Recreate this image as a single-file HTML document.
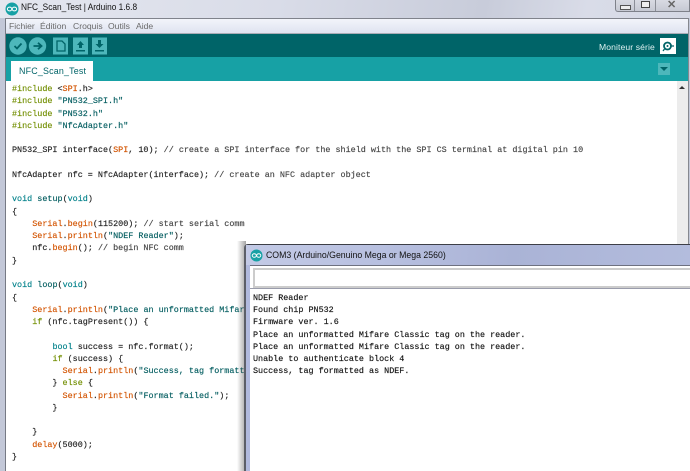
<!DOCTYPE html>
<html><head><meta charset="utf-8"><style>
html,body{margin:0;padding:0;background:#fff}
#r{position:relative;width:690px;height:471px;overflow:hidden;background:#fff;font-family:"Liberation Sans",sans-serif;filter:blur(.3px)}
#r div{position:absolute}
.code,.mon{font:8.43px/12.27px "Liberation Mono",monospace;white-space:pre;color:#222;margin:0;-webkit-text-stroke:.14px currentColor}
.o{color:#d35400}.t{color:#00818a}.g{color:#728e00}.s{color:#005c5f}
.code .c{color:#444}
.m{top:19px;font-size:8.6px;line-height:14px;color:#6a6a6a;white-space:nowrap}
</style></head><body><div id="r">
<div style="left:0;top:0;width:690px;height:18px;background:linear-gradient(100deg,#e4e7ef 0,#d9dce8 40%,#c8ccda 70%,#d9dce8 85%,#d4d8e4 100%)"></div>
<div style="left:0;top:18px;width:5px;height:453px;background:#c3c8d8"></div>
<div style="left:5px;top:18px;width:1px;height:453px;background:#767a85"></div>
<div style="left:5px;top:18px;width:685px;height:1px;background:#80838c"></div>
<svg style="position:absolute;left:5px;top:2px" width="14" height="14" viewBox="0 0 14 14"><circle cx="7" cy="7" r="6.5" fill="#17a1a5"/><ellipse cx="4.600" cy="7" rx="2.200" ry="1.900" fill="none" stroke="#fff" stroke-width="1"/><ellipse cx="9.400" cy="7" rx="2.200" ry="1.900" fill="none" stroke="#fff" stroke-width="1"/></svg>
<div style="left:21px;top:1px;font-size:9.600px;line-height:14px;color:#111;white-space:nowrap;transform:scaleX(.865);transform-origin:0 0">NFC_Scan_Test | Arduino 1.6.8</div>
<div style="left:615px;top:0;width:75px;height:12px;background:linear-gradient(#d8dae2,#c6c9d3);border:1px solid #7e818a;border-top:none;border-radius:0 0 0 3px;box-sizing:border-box"></div>
<div style="left:634px;top:0;width:1px;height:11px;background:#8b8e97"></div>
<div style="left:655px;top:0;width:1px;height:11px;background:#8b8e97"></div>
<div style="left:620px;top:5px;width:9px;height:3px;border:1px solid #555;background:#eee"></div>
<div style="left:641px;top:1px;width:7px;height:5px;border:1px solid #444;background:#eee"></div>
<div style="left:667px;top:-1px;font-size:11px;line-height:12px;font-weight:bold;color:#666">✕</div>

<div style="left:6px;top:19px;width:684px;height:14px;background:linear-gradient(#f2f4fa,#dfe3f0)"></div>
<div class="m" style="left:9px">Fichier</div>
<div class="m" style="left:40px">Édition</div>
<div class="m" style="left:73px">Croquis</div>
<div class="m" style="left:108px">Outils</div>
<div class="m" style="left:136px">Aide</div>
<div style="left:6px;top:33px;width:684px;height:1px;background:#a9acb6"></div>

<div style="left:6px;top:34px;width:684px;height:23px;background:#006468"></div>
<div style="left:6px;top:57px;width:684px;height:24px;background:#17a1a5"></div>
<svg style="position:absolute;left:9px;top:37px" width="100" height="18" viewBox="0 0 100 18">
<circle cx="9" cy="9" r="8.700" fill="#4db7bb"/><path d="M5.500 9l2.500 2.500 4.500-5" fill="none" stroke="#006468" stroke-width="1.800"/>
<circle cx="28.500" cy="9" r="8.700" fill="#4db7bb"/><path d="M24.500 9h7M29 5.800L32.500 9l-3.500 3.200" fill="none" stroke="#006468" stroke-width="1.800"/>
<rect x="44" y="0.500" width="15" height="17" fill="#4db7bb"/><path d="M48 4h5l3 3v7h-8z" fill="none" stroke="#006468" stroke-width="1.300"/>
<rect x="64" y="0.500" width="15" height="17" fill="#4db7bb"/><path d="M71.500 4l3.500 4h-2v3h-3v-3h-2zM67 13h9v1.500h-9z" fill="#006468"/>
<rect x="83" y="0.500" width="15" height="17" fill="#4db7bb"/><path d="M89 3h3v4h2.500l-4 4-4-4h2.500zM86 13h9v1.500h-9z" fill="#006468"/>
</svg>
<div style="left:599px;top:41px;font-size:8.600px;line-height:12px;color:#dff1f1;white-space:nowrap;letter-spacing:.1px">Moniteur série</div>
<div style="left:660px;top:38px;width:16px;height:16px;background:#fff"></div>
<svg style="position:absolute;left:660px;top:38px" width="16" height="16" viewBox="0 0 16 16"><circle cx="7.500" cy="8" r="3.500" fill="none" stroke="#006468" stroke-width="1.800"/><circle cx="7.500" cy="8" r="1" fill="#006468"/><path d="M4.500 11l-1.500 2M11 8h3" stroke="#006468" stroke-width="1.300"/></svg>
<div style="left:11px;top:61px;width:82px;height:20px;background:#fff"></div>
<div style="left:19px;top:61px;font-size:8.900px;line-height:20px;color:#006468;white-space:nowrap;letter-spacing:.2px">NFC_Scan_Test</div>
<div style="left:658px;top:63px;width:12px;height:12px;background:#4db7bb"></div>
<div style="left:660px;top:67px;width:0;height:0;border-left:4px solid transparent;border-right:4px solid transparent;border-top:4px solid #006468"></div>

<div style="left:677px;top:81px;width:11px;height:390px;background:#ececec"></div>
<div style="left:688px;top:18px;width:1px;height:453px;background:#85888f"></div>
<div style="left:689px;top:18px;width:1px;height:453px;background:#c3c8d8"></div>
<div style="left:679px;top:86px;width:0;height:0;border-left:3px solid transparent;border-right:3px solid transparent;border-bottom:3px solid #333"></div>

<pre class="code" style="position:absolute;left:12px;top:83px"><span class="g">#include</span> &lt;<span class="o">SPI</span>.h&gt;
<span class="g">#include</span> <span class="s">"PN532_SPI.h"</span>
<span class="g">#include</span> <span class="s">"PN532.h"</span>
<span class="g">#include</span> <span class="s">"NfcAdapter.h"</span>

PN532_SPI interface(<span class="o">SPI</span>, 10); <span class="c">// create a SPI interface for the shield with the SPI CS terminal at digital pin 10</span>

NfcAdapter nfc = NfcAdapter(interface); <span class="c">// create an NFC adapter object</span>

<span class="t">void</span> <span class="s">setup</span>(<span class="t">void</span>)
{
    <span class="o">Serial</span>.<span class="o">begin</span>(115200); <span class="c">// start serial comm</span>
    <span class="o">Serial</span>.<span class="o">println</span>(<span class="s">"NDEF Reader"</span>);
    nfc.<span class="o">begin</span>(); <span class="c">// begin NFC comm</span>
}

<span class="t">void</span> <span class="s">loop</span>(<span class="t">void</span>)
{
    <span class="o">Serial</span>.<span class="o">println</span>(<span class="s">"Place an unformatted Mifare Classic tag on the reader."</span>);
    <span class="g">if</span> (nfc.tagPresent()) {

        <span class="t">bool</span> success = nfc.format();
        <span class="g">if</span> (success) {
          <span class="o">Serial</span>.<span class="o">println</span>(<span class="s">"Success, tag formatted as NDEF."</span>);
        } <span class="g">else</span> {
          <span class="o">Serial</span>.<span class="o">println</span>(<span class="s">"Format failed."</span>);
        }

    }
    <span class="o">delay</span>(5000);
}</pre>

<div style="left:237px;top:241px;width:9px;height:230px;background:linear-gradient(90deg,rgba(120,120,120,0),rgba(90,90,90,.55))"></div>
<div style="left:244px;top:244px;width:446px;height:227px;background:#b1bade;border-radius:4px 0 0 0;border-left:2px solid #5c5f68;border-top:1px solid #3d3f47;box-sizing:border-box"></div>
<div style="left:246px;top:245px;width:444px;height:20px;background:linear-gradient(95deg,#c3cae6,#b8c0e0 30%,#aab3d6 60%,#b3bcdd)"></div>
<svg style="position:absolute;left:250px;top:249px" width="13" height="13" viewBox="0 0 14 14"><circle cx="7" cy="7" r="6.500" fill="#17a1a5"/><ellipse cx="4.600" cy="7" rx="2.200" ry="1.900" fill="none" stroke="#fff" stroke-width="1"/><ellipse cx="9.400" cy="7" rx="2.200" ry="1.900" fill="none" stroke="#fff" stroke-width="1"/></svg>
<div style="left:266px;top:249px;font-size:9.500px;line-height:13px;color:#111;white-space:nowrap;transform:scaleX(.92);transform-origin:0 0">COM3 (Arduino/Genuino Mega or Mega 2560)</div>
<div style="left:250px;top:265px;width:440px;height:206px;background:#fff"></div>
<div style="left:250px;top:265px;width:440px;height:1px;background:#6e7180"></div>
<div style="left:253px;top:268px;width:437px;height:20px;background:#fff;border-top:2px solid #ccc;border-bottom:2px solid #ccc;border-left:2px solid #ccc;box-sizing:border-box"></div>
<div style="left:250px;top:288px;width:440px;height:1px;background:#9a9cab"></div>
<pre class="mon" style="position:absolute;left:253px;top:292px;color:#111;line-height:12.170px;font-size:8.420px">NDEF Reader
Found chip PN532
Firmware ver. 1.6
Place an unformatted Mifare Classic tag on the reader.
Place an unformatted Mifare Classic tag on the reader.
Unable to authenticate block 4
Success, tag formatted as NDEF.</pre>
</div></body></html>
